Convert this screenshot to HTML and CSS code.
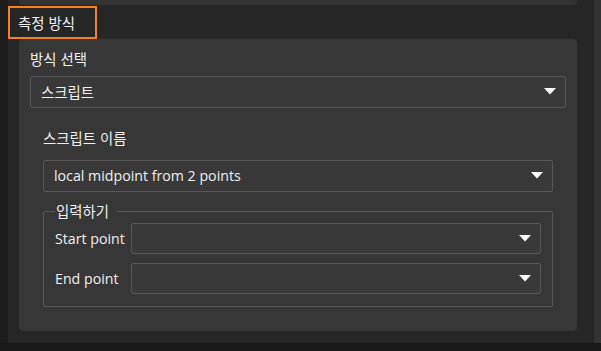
FILE: index.html
```html
<!DOCTYPE html>
<html lang="ko">
<head>
<meta charset="utf-8">
<link rel="stylesheet" href="styles.css">
</head>
<body>
<div class="screen">
  <div class="left-strip"></div>
  <div class="panel">
    <div class="prev-card"></div>
    <div class="title-box"><span class="title">측정 방식</span></div>
    <div class="card">
      <div class="label">방식 선택</div>
      <div class="combo combo-wide">
        <span class="combo-text">스크립트</span>
        <svg class="arrow" width="12" height="7" viewBox="0 0 12 7"><polygon points="0,0 12,0 6,6.5" fill="#ffffff"/></svg>
      </div>
      <div class="sub">
        <div class="label">스크립트 이름</div>
        <div class="combo">
          <span class="combo-text latin">local midpoint from 2 points</span>
          <svg class="arrow" width="12" height="7" viewBox="0 0 12 7"><polygon points="0,0 12,0 6,6.5" fill="#ffffff"/></svg>
        </div>
        <fieldset class="group">
          <legend class="legend">입력하기</legend>
          <div class="row">
            <span class="row-label latin">Start point</span>
            <div class="combo combo-row">
              <span class="combo-text"></span>
              <svg class="arrow" width="12" height="7" viewBox="0 0 12 7"><polygon points="0,0 12,0 6,6.5" fill="#ffffff"/></svg>
            </div>
          </div>
          <div class="row">
            <span class="row-label latin">End point</span>
            <div class="combo combo-row">
              <span class="combo-text"></span>
              <svg class="arrow" width="12" height="7" viewBox="0 0 12 7"><polygon points="0,0 12,0 6,6.5" fill="#ffffff"/></svg>
            </div>
          </div>
        </fieldset>
      </div>
    </div>
  </div>
  <div class="scroll-strip"></div>
</div>
</body>
</html>
```

FILE: styles.css
```css
html, body {
  margin: 0;
  padding: 0;
  background: #191919;
}
body {
  width: 601px;
  height: 351px;
  overflow: hidden;
  font-family: "Noto Sans CJK KR", "Open Sans", sans-serif;
  font-size: 14.4px;
  color: #f0f0f0;
}
.screen {
  display: flex;
  height: 343px;
}
.left-strip {
  width: 8px;
  background: #1d1d1d;
}
.panel {
  width: 585px;
  background: #262626;
  display: flex;
  flex-direction: column;
}
.scroll-strip {
  width: 8px;
  background: #333333;
  border-left: 1px solid #232323;
  box-sizing: border-box;
}
.prev-card {
  margin-left: 11px;
  width: 558px;
  height: 5px;
  background: #333333;
  border-radius: 0 0 4px 4px;
}
.title-box {
  margin-top: 1px;
  width: 89px;
  height: 33px;
  box-sizing: border-box;
  border: 2px solid #f5821f;
  padding-left: 8px;
  display: flex;
  align-items: center;
}
.title {
  line-height: 20px;
  color: #f2f2f2;
}
.card {
  margin-left: 11px;
  width: 558px;
  box-sizing: border-box;
  background: #373737;
  border-radius: 4px;
  padding: 10px 11px 24px;
  display: flex;
  flex-direction: column;
}
.label {
  line-height: 20px;
  height: 20px;
}
.card > .label {
  margin-bottom: 7px;
}
.combo {
  height: 32px;
  box-sizing: border-box;
  border: 1px solid #585858;
  border-radius: 2px;
  background: #393939;
  display: flex;
  align-items: center;
  justify-content: space-between;
  padding: 0 9px 0 10px;
}
.combo-text {
  line-height: 20px;
}
.latin {
  font-family: "Open Sans", "Noto Sans CJK KR", sans-serif;
  font-size: 14.2px;
}
.arrow {
  display: block;
  margin-top: -1px;
}
.sub {
  margin: 0 13px;
  padding-top: 20px;
  display: flex;
  flex-direction: column;
}
.sub > .label {
  margin-bottom: 12px;
}
.group {
  margin: 9px 0 0;
  padding: 2px 11px 12px 11px;
  border: 1px solid #575757;
  border-radius: 2px;
  min-inline-size: 0;
  display: flex;
  flex-direction: column;
  gap: 9px;
}
.legend {
  padding: 0 8px 0 1px;
  margin-left: 0;
  line-height: 20px;
}
.row {
  display: flex;
  align-items: center;
  height: 31px;
}
.row-label {
  width: 76px;
  flex: none;
  line-height: 20px;
}
.combo-row {
  flex: 1;
  height: 31px;
}
```
